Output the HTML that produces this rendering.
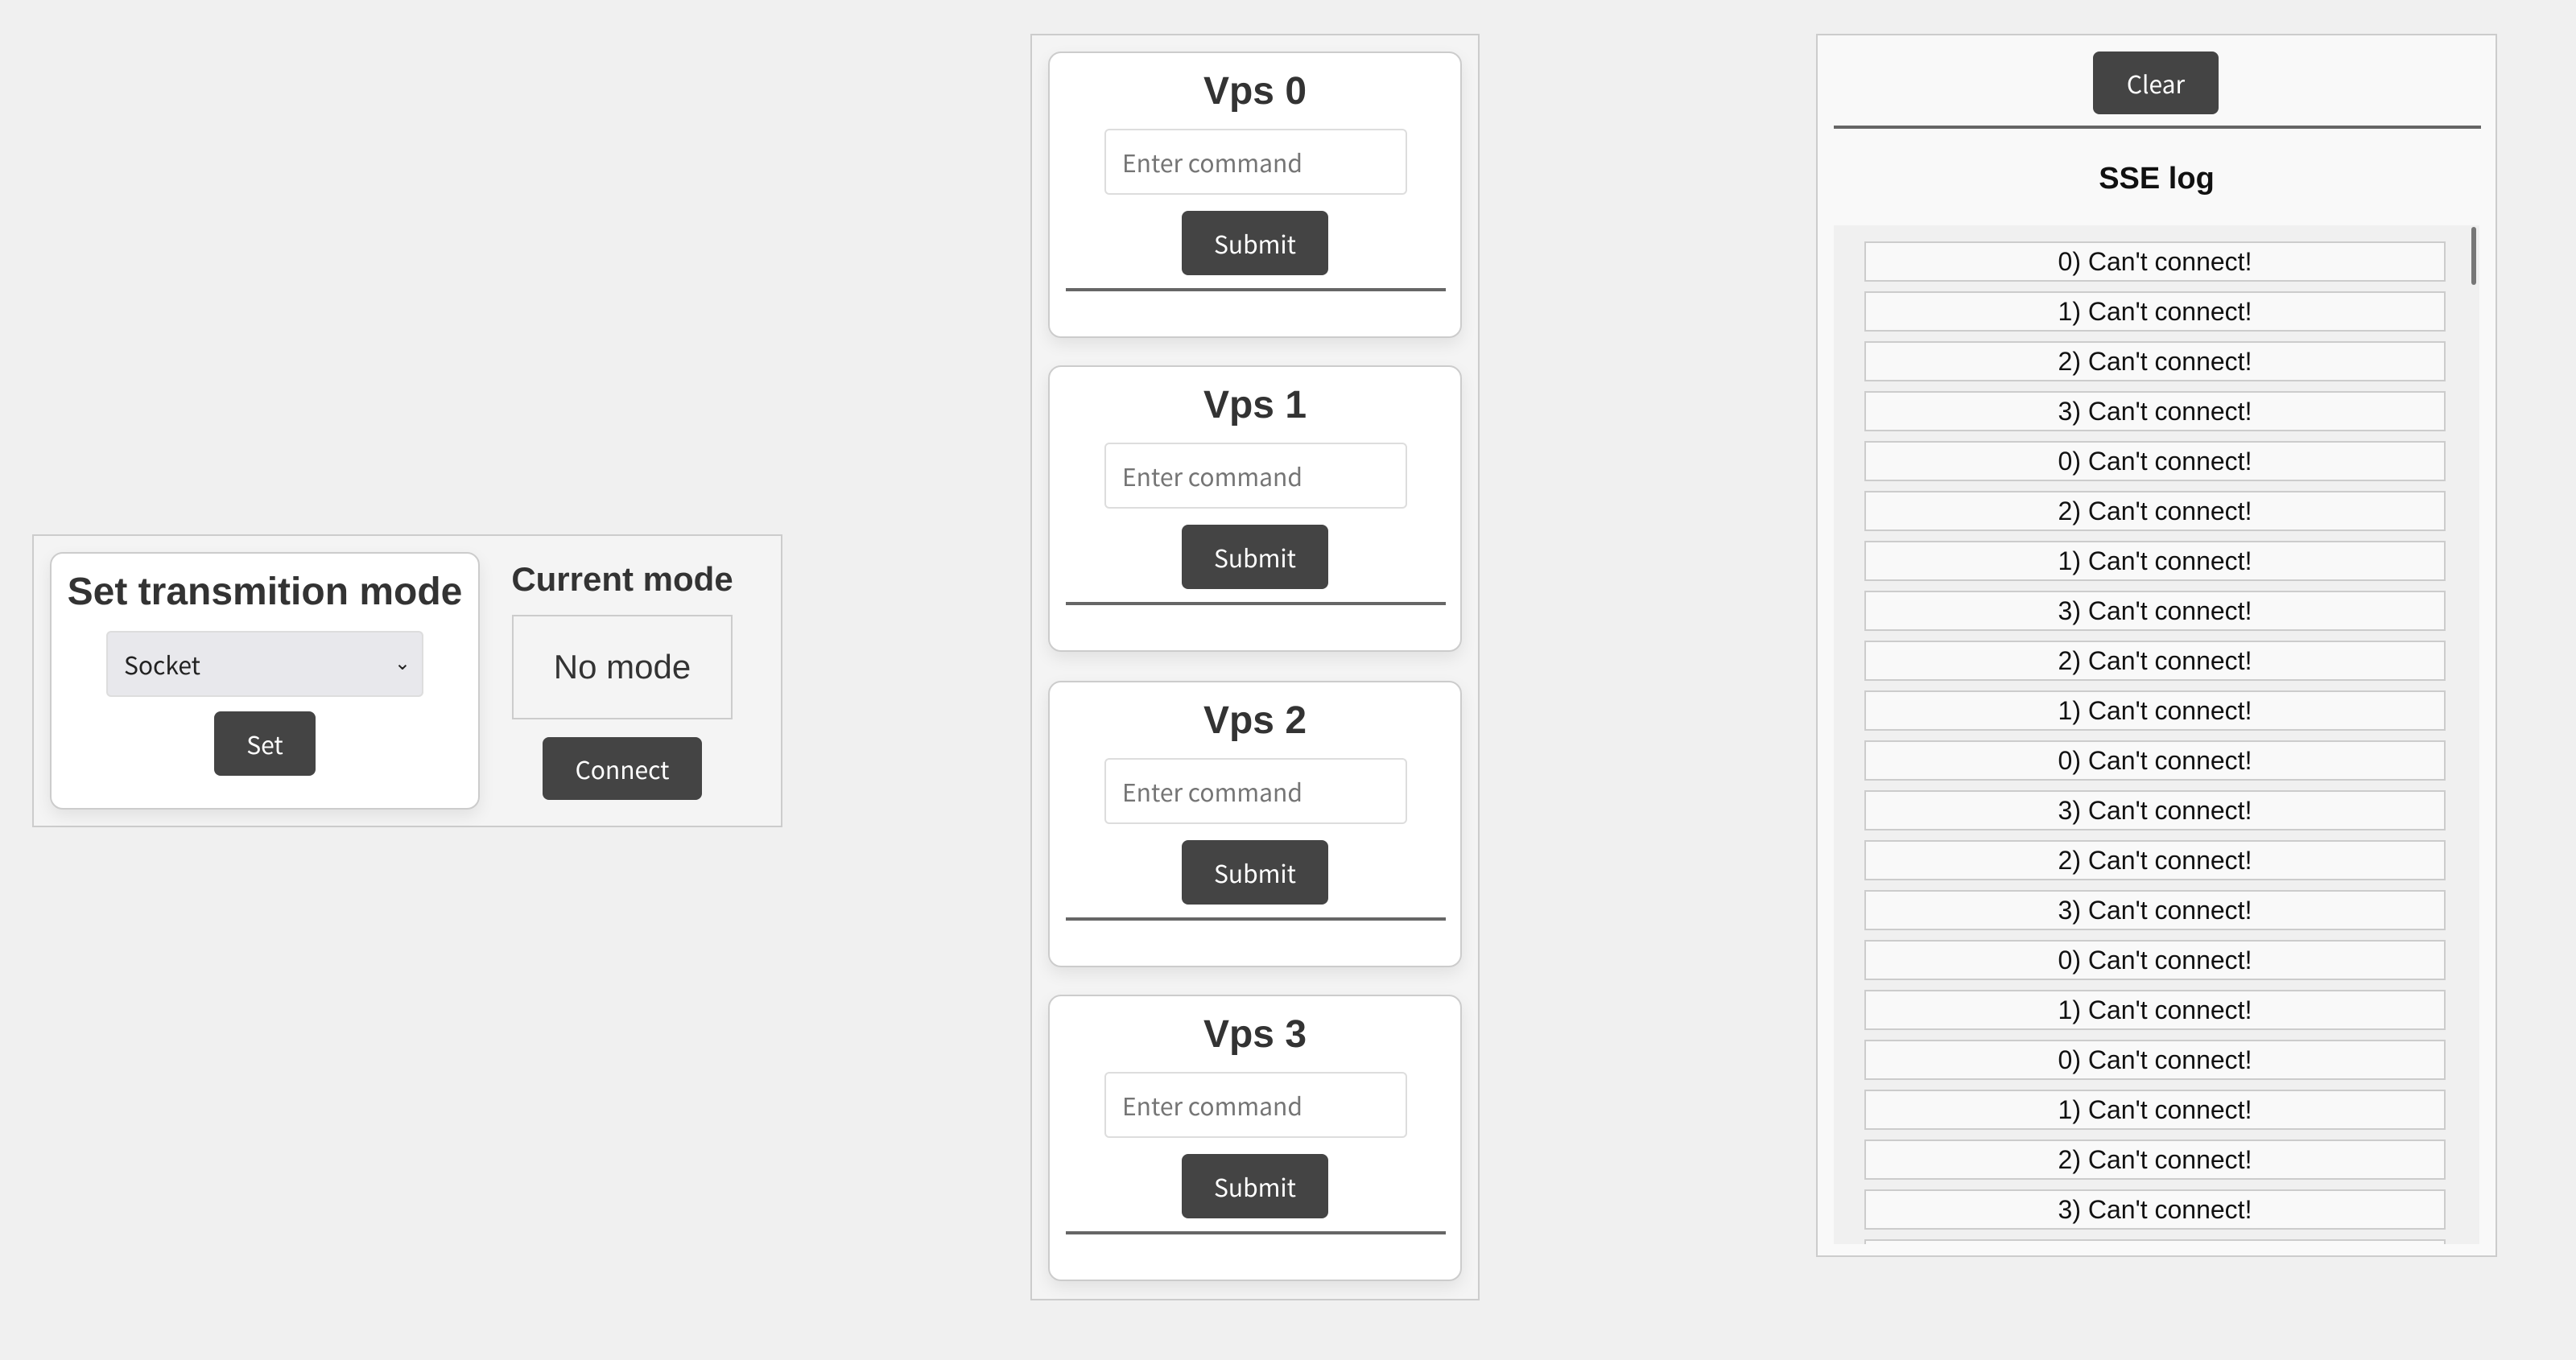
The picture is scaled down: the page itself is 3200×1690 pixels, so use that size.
<!DOCTYPE html>
<html><head><meta charset="utf-8"><style>
html{zoom:2}
body{margin:0;width:1600px;height:845px;background:#f0f0f0;position:relative;overflow:hidden;font-family:"Liberation Sans",sans-serif;color:#333}
.abs{position:absolute;box-sizing:border-box}
.btn{position:absolute;box-sizing:border-box;background:#444;color:#fff;border-radius:4px;font-family:"Noto Sans CJK SC","DejaVu Sans",sans-serif;font-size:15px;display:flex;align-items:center;justify-content:center}
.card{position:absolute;box-sizing:border-box;background:#fff;border:1px solid #ccc;border-radius:8px;box-shadow:0 4px 10px rgba(0,0,0,.08)}
.ttl{position:absolute;left:0;right:0;text-align:center;font-weight:bold}
.inp{position:absolute;box-sizing:border-box;border:1px solid #ddd;border-radius:3px;background:#fff;color:#757575;font-family:"Noto Sans CJK SC","DejaVu Sans",sans-serif;font-size:15px;padding-left:10px;display:flex;align-items:center}
.hr{position:absolute;height:2px;background:#666}
.item{position:absolute;left:19px;width:361px;height:25px;box-sizing:border-box;border:1px solid #ccc;background:#f9f9f9;color:#111;font-size:16px;text-align:center;line-height:23px}
</style></head><body>

<div class="abs" style="left:20px;top:332px;width:466px;height:182px;border:1px solid #ccc;background:#f4f4f4"></div>
<div class="card" style="left:31px;top:343px;width:267px;height:160px">
  <div class="ttl" style="top:10px;font-size:24px;line-height:28px;color:#333">Set transmition mode</div>
  <div class="abs" style="left:34px;top:48px;width:197px;height:41px;background:#e8e8ec;border:1px solid #ddd;border-radius:3px;font-family:'Noto Sans CJK SC','DejaVu Sans',sans-serif;font-size:15px;color:#222;padding-left:10px;display:flex;align-items:center">Socket<span style="position:absolute;right:7px;top:9px;font-size:12px">&#8964;</span></div>
  <div class="btn" style="left:101px;top:98px;width:63px;height:40px">Set</div>
</div>
<div class="ttl" style="left:316px;right:auto;width:141px;top:348px;font-size:21px;line-height:24px">Current mode</div>
<div class="abs" style="left:318px;top:382px;width:137px;height:65px;border:1px solid #ccc;background:#f4f4f4;display:flex;align-items:center;justify-content:center;font-size:21px;color:#333">No mode</div>
<div class="btn" style="left:337px;top:458px;width:99px;height:39px">Connect</div>

<div class="abs" style="left:640px;top:21px;width:279px;height:787px;border:1px solid #ccc;background:#f4f4f4"></div>
<div class="card" style="left:651px;top:32px;width:257px;height:178px"><div class="ttl" style="top:10px;font-size:24px;line-height:28px">Vps 0</div><div class="inp" style="left:34px;top:47px;width:188px;height:41px">Enter command</div><div class="btn" style="left:82px;top:98px;width:91px;height:40px">Submit</div><div class="hr" style="left:10px;right:9px;top:146px"></div></div>
<div class="card" style="left:651px;top:227px;width:257px;height:178px"><div class="ttl" style="top:10px;font-size:24px;line-height:28px">Vps 1</div><div class="inp" style="left:34px;top:47px;width:188px;height:41px">Enter command</div><div class="btn" style="left:82px;top:98px;width:91px;height:40px">Submit</div><div class="hr" style="left:10px;right:9px;top:146px"></div></div>
<div class="card" style="left:651px;top:423px;width:257px;height:178px"><div class="ttl" style="top:10px;font-size:24px;line-height:28px">Vps 2</div><div class="inp" style="left:34px;top:47px;width:188px;height:41px">Enter command</div><div class="btn" style="left:82px;top:98px;width:91px;height:40px">Submit</div><div class="hr" style="left:10px;right:9px;top:146px"></div></div>
<div class="card" style="left:651px;top:618px;width:257px;height:178px"><div class="ttl" style="top:10px;font-size:24px;line-height:28px">Vps 3</div><div class="inp" style="left:34px;top:47px;width:188px;height:41px">Enter command</div><div class="btn" style="left:82px;top:98px;width:91px;height:40px">Submit</div><div class="hr" style="left:10px;right:9px;top:146px"></div></div>

<div class="abs" style="left:1128px;top:21px;width:423px;height:760px;border:1px solid #ccc;background:#f9f9f9"></div>
<div class="btn" style="left:1300px;top:32px;width:78px;height:39px">Clear</div>
<div class="hr" style="left:1139px;width:402px;top:78px"></div>
<div class="ttl" style="left:1128px;right:auto;width:423px;top:99px;font-size:19px;line-height:24px;color:#111">SSE log</div>
<div class="abs" style="left:1139px;top:140px;width:401px;height:633px;background:#f0f0f0;overflow:hidden">
  <div class="item" style="top:10px">0) Can't connect!</div>
  <div class="item" style="top:41px">1) Can't connect!</div>
  <div class="item" style="top:72px">2) Can't connect!</div>
  <div class="item" style="top:103px">3) Can't connect!</div>
  <div class="item" style="top:134px">0) Can't connect!</div>
  <div class="item" style="top:165px">2) Can't connect!</div>
  <div class="item" style="top:196px">1) Can't connect!</div>
  <div class="item" style="top:227px">3) Can't connect!</div>
  <div class="item" style="top:258px">2) Can't connect!</div>
  <div class="item" style="top:289px">1) Can't connect!</div>
  <div class="item" style="top:320px">0) Can't connect!</div>
  <div class="item" style="top:351px">3) Can't connect!</div>
  <div class="item" style="top:382px">2) Can't connect!</div>
  <div class="item" style="top:413px">3) Can't connect!</div>
  <div class="item" style="top:444px">0) Can't connect!</div>
  <div class="item" style="top:475px">1) Can't connect!</div>
  <div class="item" style="top:506px">0) Can't connect!</div>
  <div class="item" style="top:537px">1) Can't connect!</div>
  <div class="item" style="top:568px">2) Can't connect!</div>
  <div class="item" style="top:599px">3) Can't connect!</div>
  <div class="item" style="top:630px">0) Can't connect!</div>
  <div class="abs" style="left:396px;top:1px;width:3px;height:36px;background:#777;border-radius:2px"></div>
</div>
</body></html>
